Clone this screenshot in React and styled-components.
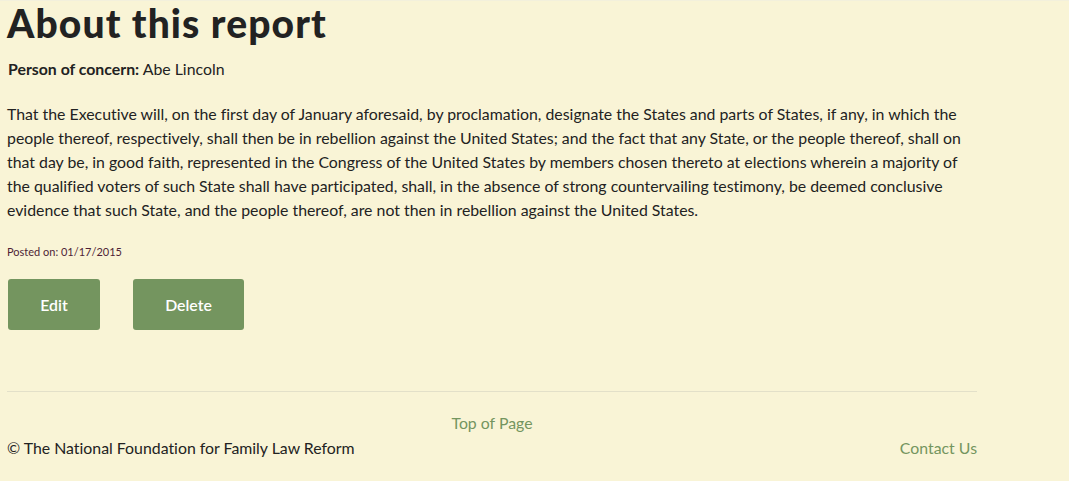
import React from 'react';
import styled, { createGlobalStyle } from 'styled-components';

const GlobalStyle = createGlobalStyle`
    body {
        margin: 0;
        background-color: #f9f4d6;
        border-top: 1px solid #f3f0dc;
        font-family: Lato, "Open Sans", sans-serif;
        font-variant-ligatures: no-common-ligatures;
        color: #222;
    }
    button {
        font-variant-ligatures: no-common-ligatures;
    }
`

const Page = styled.div`
    width: 970px;
    padding: 0 0 0 7px;
`

const Title = styled.h1`
    font-family: Lato, sans-serif;
    font-weight: 900;
    font-size: 39px;
    line-height: 48px;
    letter-spacing: 1.1px;
    color: #222;
    margin: -2px 0 0 0;
`

const Person = styled.p`
    font-size: 15.85px;
    line-height: 24px;
    margin: 10px 0 0 1px;
`

const Body = styled.p`
    font-size: 15.85px;
    line-height: 24px;
    margin: 21px 0 0 0;
`

const Posted = styled.p`
    font-size: 11px;
    line-height: 16px;
    color: #4e1f36;
    margin: 22px 0 0 0;
`

const Actions = styled.div`
    display: flex;
    gap: 33px;
    margin: 19px 0 0 1px;
`

const Button = styled.button`
    background-color: #74955f;
    color: #fff;
    border: none;
    border-radius: 3px;
    height: 51px;
    width: ${p => p.$w}px;
    font-family: Lato, sans-serif;
    font-size: 15.85px;
    font-weight: 600;
    padding: 0;
`

const Rule = styled.hr`
    border: none;
    border-top: 1px solid #e3e0c9;
    margin: 61px 0 0 0;
`

const Footer = styled.footer`
    font-size: 15.85px;
    line-height: 24px;
    padding-top: 19px;
`

const TopLink = styled.a`
    display: block;
    text-align: center;
    color: #74955f;
    text-decoration: none;
`

const FooterRow = styled.div`
    display: flex;
    justify-content: space-between;
    margin-top: 1px;
`

const Copy = styled.span`
    color: #222;
`

const Contact = styled.a`
    color: #74955f;
    text-decoration: none;
`

const App = () => {
    return (
        <Page>
            <GlobalStyle />
            <Title>About this report</Title>
            <Person><b>Person of concern:</b> Abe Lincoln</Person>
            <Body>
                That the Executive will, on the first day of January aforesaid, by proclamation, designate the States and parts of States, if any, in which the people thereof, respectively, shall then be in rebellion against the United States; and the fact that any State, or the people thereof, shall on that day be, in good faith, represented in the Congress of the United States by members chosen thereto at elections wherein a majority of the qualified voters of such State shall have participated, shall, in the absence of strong countervailing testimony, be deemed conclusive evidence that such State, and the people thereof, are not then in rebellion against the United States.
            </Body>
            <Posted>Posted on: 01/17/2015</Posted>
            <Actions>
                <Button $w={92}>Edit</Button>
                <Button $w={111}>Delete</Button>
            </Actions>
            <Rule />
            <Footer>
                <TopLink href="#">Top of Page</TopLink>
                <FooterRow>
                    <Copy>© The National Foundation for Family Law Reform</Copy>
                    <Contact href="#">Contact Us</Contact>
                </FooterRow>
            </Footer>
        </Page>
    );
}

export default App;
